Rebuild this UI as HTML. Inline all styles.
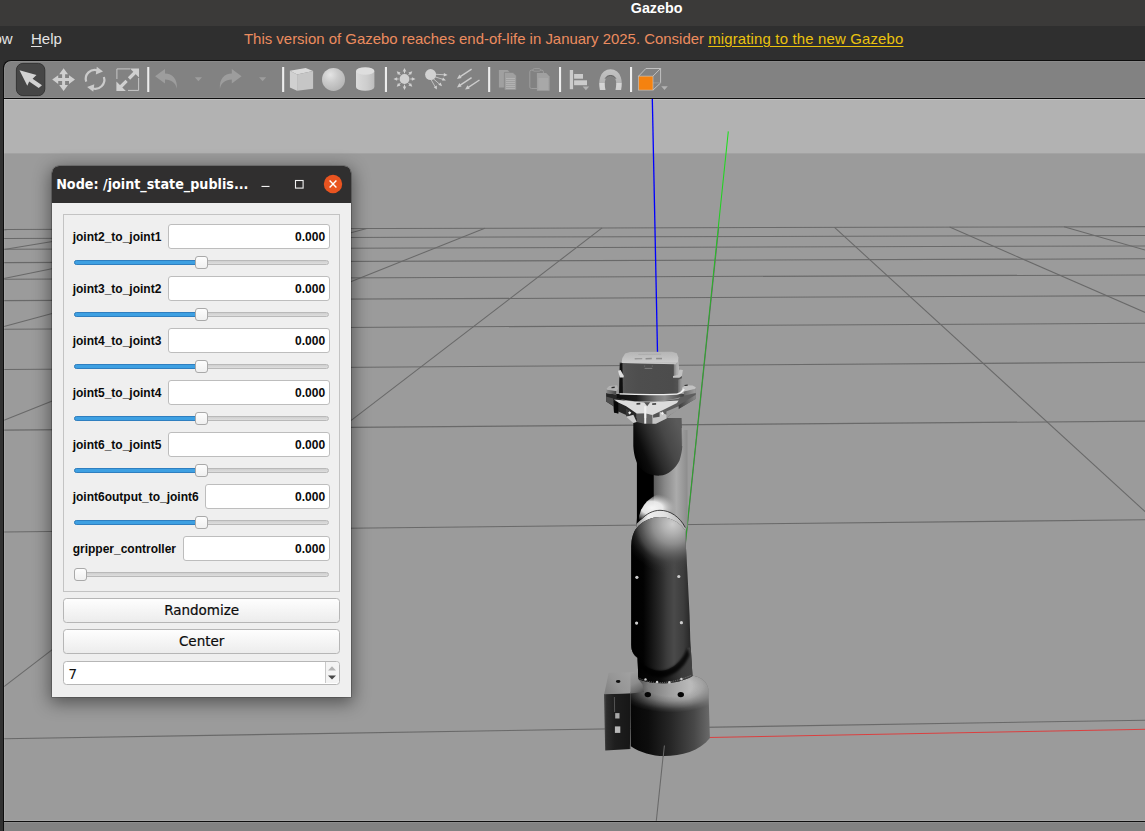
<!DOCTYPE html>
<html lang="en"><head><meta charset="utf-8"><title>Gazebo</title>
<style>
html,body{margin:0;padding:0;overflow:hidden}
body{width:1145px;height:831px;overflow:hidden;position:relative;background:#2f2f2f;font-family:"Liberation Sans",sans-serif}
#titlebar{position:absolute;left:0;top:0;width:1145px;height:26px;background:#3b3a39;color:#fff;font-weight:700;font-size:14.3px}
#titlebar span{position:absolute;left:630.8px;top:0px;line-height:17px;white-space:pre}
#menubar{position:absolute;left:0;top:26px;width:1145px;height:34px;background:#2f2f2f;color:#e4e4e4;font-size:15px}
#menubar .m{position:absolute;top:4px;line-height:17px;white-space:pre}
#menubar u{text-decoration:underline;text-underline-offset:2px}
#eol{position:absolute;left:244px;top:4px;line-height:17px;white-space:pre;color:#ec8c5f;font-size:14.95px}
#eol a{color:#eac20e;letter-spacing:.16px;text-decoration:underline;text-underline-offset:2px}
#scene{position:absolute;left:0;top:0}
#toolbar{position:absolute;left:3px;top:60px;width:1142px;border-right:0 !important;height:39px;background:#828282;border:1px solid #0e0e0e;border-radius:8px 0 0 0;box-sizing:border-box;box-shadow:inset 1px 0 0 rgba(255,255,255,.08),inset 0 1px 0 rgba(255,255,255,.08),inset 0 -1px 0 rgba(255,255,255,.08)}
#toolbar svg{position:absolute;left:-4px;top:-1px}
#dlg{position:absolute;left:52px;top:166px;width:299px;height:530.7px;background:#efefef;border-radius:7px 7px 0 0;box-shadow:0 4px 17px 2px rgba(0,0,0,.46),0 0 0 .6px rgba(0,0,0,.35)}
#dlgt{position:absolute;left:0;top:0;width:299px;height:36.6px;background:#302f2f;border-radius:7px 7px 0 0;color:#fff}
#dlgt .tt{position:absolute;left:4.2px;top:10.1px;font:700 14.2px/17px "DejaVu Sans Condensed","DejaVu Sans","Liberation Sans",sans-serif;white-space:pre}
#dlgt svg{position:absolute;left:0;top:0}
#grp{position:absolute;left:11px;top:48px;width:274.8px;height:376.3px;border:1px solid #c3c3c3;box-sizing:content-box}
.lb{position:absolute;left:20.7px;font:700 12px/14px "Liberation Sans",sans-serif;color:#0a0a0a;white-space:pre}
.inp{position:absolute;height:24.6px;box-sizing:border-box;background:#fff;border:1px solid #bdbdbd;border-radius:3px}
.inp span{position:absolute;right:3.9px;top:4.9px;font:700 12px/14px "Liberation Sans",sans-serif;color:#0a0a0a}
.grv{position:absolute;left:22px;width:255px;height:5.4px;box-sizing:border-box;border:1px solid #b9b9b9;border-radius:3px;background:linear-gradient(#cfcfcf,#dedede)}
.fil{position:absolute;left:22px;height:5.4px;box-sizing:border-box;border:1px solid #2f7fc0;border-radius:3px;background:#3ea0e2}
.hdl{position:absolute;width:12.6px;height:12.4px;box-sizing:border-box;border:1px solid #a9a9a9;border-radius:3px;background:linear-gradient(#fdfdfd,#f0f0f0)}
.btn{position:absolute;left:11px;width:277.3px;height:24.2px;box-sizing:border-box;border:1px solid #b6b6b6;border-radius:3.5px;background:linear-gradient(#fefefe,#ececec);text-align:center;color:#111}
.btn span{font:400 13.5px/23.6px "DejaVu Sans","Liberation Sans",sans-serif;-webkit-text-stroke:.2px #0c0c0c;color:#0c0c0c}
#spin{position:absolute;left:11px;top:495.2px;width:277.3px;height:23.6px;box-sizing:border-box;border:1px solid #b6b6b6;border-radius:3.5px;background:#fff;color:#111}
#spin span{position:absolute;left:4.3px;top:.7px;font:400 14px/22px "DejaVu Sans","Liberation Sans",sans-serif}
#spin i{position:absolute;right:13.6px;top:0;width:1px;height:21.2px;background:#c9c9c9}
#spin svg{position:absolute;right:.6px;top:-1px}
#spin:after{content:"";position:absolute;right:0;top:0;width:13.6px;height:21.2px;background:#f4f4f4;border-radius:0 3px 3px 0;z-index:0}
#spin svg{z-index:1}

</style></head><body>
<div id="titlebar"><span>Gazebo</span></div>
<div id="menubar"><span class="m" style="left:-6.6px">ow</span><span class="m" style="left:31px"><u>H</u>elp</span><span id="eol">This version of Gazebo reaches end-of-life in January 2025. Consider <a>migrating to the new Gazebo</a></span></div>
<svg id="scene" width="1145" height="831" viewBox="0 0 1145 831">
<rect x="4" y="98" width="1141" height="56" fill="#b2b2b2"/><rect x="4" y="99" width="1141" height="1" fill="#c2c2c2"/>
<rect x="4" y="153.4" width="1141" height="668" fill="#9b9b9b"/>
<g stroke="#696969" stroke-width="1.05" fill="none"><line x1="4.0" y1="738.7" x2="1150.0" y2="720.1"/><line x1="4.0" y1="531.9" x2="1150.0" y2="519.7"/><line x1="4.0" y1="430.1" x2="1150.0" y2="421.1"/><line x1="4.0" y1="369.5" x2="1150.0" y2="362.3"/><line x1="4.0" y1="329.2" x2="1150.0" y2="323.3"/><line x1="4.0" y1="300.6" x2="1150.0" y2="295.6"/><line x1="4.0" y1="279.2" x2="1150.0" y2="274.9"/><line x1="4.0" y1="262.6" x2="1150.0" y2="258.7"/><line x1="4.0" y1="249.3" x2="1150.0" y2="245.9"/><line x1="4.0" y1="238.4" x2="1150.0" y2="235.4"/><line x1="4.0" y1="229.4" x2="1150.0" y2="226.6"/><line x1="7.7" y1="229.4" x2="4.0" y2="229.9"/><line x1="128.2" y1="229.1" x2="4.0" y2="249.4"/><line x1="247.8" y1="228.8" x2="4.0" y2="278.5"/><line x1="366.7" y1="228.5" x2="4.0" y2="326.4"/><line x1="484.8" y1="228.2" x2="4.0" y2="420.3"/><line x1="602.1" y1="227.9" x2="4.0" y2="686.7"/><line x1="718.7" y1="227.6" x2="656.3" y2="821.0"/><line x1="834.5" y1="227.4" x2="1150.0" y2="516.1"/><line x1="949.6" y1="227.1" x2="1150.0" y2="314.6"/><line x1="1064.0" y1="226.8" x2="1150.0" y2="251.5"/></g>
<line x1="652.3" y1="98" x2="657.5" y2="352" stroke="#0000ff" stroke-width="1.3"/>
<defs><linearGradient id="gGreen" gradientUnits="userSpaceOnUse" x1="0" y1="131" x2="0" y2="748"><stop offset="0" stop-color="#1be01b"/><stop offset=".12" stop-color="#22d022"/><stop offset=".3" stop-color="#2ca62c"/><stop offset="1" stop-color="#2e9e2e"/></linearGradient></defs><line x1="728.3" y1="131.4" x2="664" y2="748" stroke="url(#gGreen)" stroke-width="1.05"/>
<line x1="666" y1="738.3" x2="1145" y2="729.3" stroke="#e23636" stroke-width=".9"/>
<defs>
<linearGradient id="gBaseH" gradientUnits="userSpaceOnUse" x1="631" y1="0" x2="710" y2="0"><stop offset="0" stop-color="#060606"/><stop offset=".22" stop-color="#0d0d0d"/><stop offset=".5" stop-color="#262626"/><stop offset=".8" stop-color="#484848"/><stop offset="1" stop-color="#6a6a6a"/></linearGradient>
<linearGradient id="gBaseTop" gradientUnits="userSpaceOnUse" x1="631" y1="0" x2="710" y2="0"><stop offset="0" stop-color="#505050"/><stop offset=".22" stop-color="#7a7a7a"/><stop offset=".5" stop-color="#a0a0a0"/><stop offset=".75" stop-color="#bababa"/><stop offset="1" stop-color="#b2b2b2"/></linearGradient><radialGradient id="gFade" gradientUnits="userSpaceOnUse" cx="670" cy="686" r="57.5" gradientTransform="translate(670 686) scale(1 .46) translate(-670 -686)"><stop offset="0" stop-color="#fff"/><stop offset=".39" stop-color="#fff"/><stop offset=".565" stop-color="#cfcfcf"/><stop offset=".74" stop-color="#787878"/><stop offset=".87" stop-color="#2e2e2e"/><stop offset="1" stop-color="#000"/></radialGradient><mask id="mTop" maskUnits="userSpaceOnUse" x="625" y="670" width="90" height="90"><rect x="625" y="670" width="90" height="90" fill="url(#gFade)"/></mask>

<linearGradient id="gBoxTop" gradientUnits="userSpaceOnUse" x1="605" y1="694" x2="633" y2="672"><stop offset="0" stop-color="#808080"/><stop offset=".45" stop-color="#969696"/><stop offset="1" stop-color="#a2a2a2"/></linearGradient>
<linearGradient id="gBoxF" gradientUnits="userSpaceOnUse" x1="604" y1="0" x2="631" y2="0"><stop offset="0" stop-color="#4c4c4c"/><stop offset=".1" stop-color="#2c2c2c"/><stop offset=".4" stop-color="#1e1e1e"/><stop offset="1" stop-color="#161616"/></linearGradient>
<linearGradient id="gLow" gradientUnits="userSpaceOnUse" x1="631" y1="0" x2="692" y2="0"><stop offset="0" stop-color="#000"/><stop offset=".2" stop-color="#020202"/><stop offset=".295" stop-color="#0e0e0e"/><stop offset=".487" stop-color="#2a2a2a"/><stop offset=".59" stop-color="#3c3c3c"/><stop offset=".705" stop-color="#4a4a4a"/><stop offset=".86" stop-color="#3c3c3c"/><stop offset=".95" stop-color="#2c2c2c"/><stop offset="1" stop-color="#242424"/></linearGradient>
<linearGradient id="gUp" gradientUnits="userSpaceOnUse" x1="636.9" y1="0" x2="687.6" y2="0"><stop offset="0" stop-color="#000"/><stop offset=".325" stop-color="#000"/><stop offset=".335" stop-color="#5c5c5c"/><stop offset=".55" stop-color="#888"/><stop offset=".78" stop-color="#ababab"/><stop offset="1" stop-color="#8c8c8c"/></linearGradient>
<linearGradient id="gWr" gradientUnits="userSpaceOnUse" x1="635" y1="456" x2="683" y2="436"><stop offset="0" stop-color="#020202"/><stop offset=".18" stop-color="#0c0c0c"/><stop offset=".42" stop-color="#2c2c2c"/><stop offset=".68" stop-color="#474747"/><stop offset="1" stop-color="#5a5a5a"/></linearGradient>
<radialGradient id="gSph" gradientUnits="userSpaceOnUse" cx="672.5" cy="524" r="50"><stop offset="0" stop-color="#cccccc"/><stop offset=".2" stop-color="#b0b0b0"/><stop offset=".4" stop-color="#8e8e8e"/><stop offset=".56" stop-color="#6a6a6a" stop-opacity=".95"/><stop offset=".68" stop-color="#555" stop-opacity=".8"/><stop offset=".78" stop-color="#4a4a4a" stop-opacity=".4"/><stop offset=".9" stop-color="#444" stop-opacity=".12"/><stop offset="1" stop-color="#444" stop-opacity="0"/></radialGradient>
<radialGradient id="gHi" gradientUnits="userSpaceOnUse" cx="652" cy="508" r="24" gradientTransform="translate(0 203.2) scale(1 .6)"><stop offset="0" stop-color="#f6f6f6"/><stop offset=".45" stop-color="#eee" stop-opacity=".95"/><stop offset=".75" stop-color="#ccc" stop-opacity=".5"/><stop offset="1" stop-color="#b0b0b0" stop-opacity="0"/></radialGradient>
<linearGradient id="gBand" gradientUnits="userSpaceOnUse" x1="638" y1="0" x2="688" y2="0"><stop offset="0" stop-color="#9a9a9a"/><stop offset=".2" stop-color="#eee"/><stop offset=".55" stop-color="#e0e0e0"/><stop offset="1" stop-color="#a8a8a8"/></linearGradient>
<linearGradient id="gHeadF" gradientUnits="userSpaceOnUse" x1="620" y1="0" x2="682" y2="0"><stop offset="0" stop-color="#5c5c5c"/><stop offset=".1" stop-color="#525252"/><stop offset=".3" stop-color="#4e4e4e"/><stop offset=".85" stop-color="#4c4c4c"/><stop offset="1" stop-color="#585858"/></linearGradient>
<linearGradient id="gHeadR" gradientUnits="userSpaceOnUse" x1="673" y1="0" x2="680" y2="0"><stop offset="0" stop-color="#707070"/><stop offset=".5" stop-color="#a8a8a8"/><stop offset="1" stop-color="#c2c2c2"/></linearGradient>
<linearGradient id="gHeadT" gradientUnits="userSpaceOnUse" x1="0" y1="351" x2="0" y2="364"><stop offset="0" stop-color="#b4b4b4"/><stop offset=".5" stop-color="#c0c0c0"/><stop offset=".85" stop-color="#cacaca"/><stop offset="1" stop-color="#a0a0a0"/></linearGradient>
<linearGradient id="gRing" gradientUnits="userSpaceOnUse" x1="616" y1="0" x2="684" y2="0"><stop offset="0" stop-color="#0c0c0c"/><stop offset=".3" stop-color="#1c1c1c"/><stop offset=".6" stop-color="#7a7a7a"/><stop offset=".72" stop-color="#8c8c8c"/><stop offset="1" stop-color="#404040"/></linearGradient>
<clipPath id="cArm"><path d="M636.9 430 L636.9 518 C636.6 522 636.4 525 636.2 527 C633 533 631.1 539 631.1 546 L631.1 645 C631.5 652 634 655 637.6 658 L638.3 679 C655 686 680 684 692.5 676 L690.3 640 L689.6 615 L687.4 572 L685.7 543 L685.3 530 L687.5 526 L687.5 430 Z"/></clipPath>
<clipPath id="cHi"><circle cx="668" cy="522" r="29.5"/></clipPath>
<linearGradient id="gNeck" gradientUnits="userSpaceOnUse" x1="637" y1="0" x2="693" y2="0"><stop offset="0" stop-color="#000"/><stop offset=".4" stop-color="#0a0a0a"/><stop offset=".6" stop-color="#222"/><stop offset=".8" stop-color="#3a3a3a"/><stop offset="1" stop-color="#424242"/></linearGradient><filter id="fB" x="-20%" y="-20%" width="140%" height="140%"><feGaussianBlur stdDeviation=".9"/></filter>
<linearGradient id="gWingR" gradientUnits="userSpaceOnUse" x1="678" y1="0" x2="696" y2="0"><stop offset="0" stop-color="#3a3a3a"/><stop offset="1" stop-color="#8a8a8a"/></linearGradient>
<linearGradient id="gEarL" gradientUnits="userSpaceOnUse" x1="606" y1="0" x2="616.5" y2="0"><stop offset="0" stop-color="#8c8c8c"/><stop offset="1" stop-color="#444"/></linearGradient>
<linearGradient id="gEarR" gradientUnits="userSpaceOnUse" x1="684" y1="0" x2="696" y2="0"><stop offset="0" stop-color="#6a6a6a"/><stop offset="1" stop-color="#a0a0a0"/></linearGradient>
<linearGradient id="gHeadR2" gradientUnits="userSpaceOnUse" x1="678" y1="0" x2="682" y2="0"><stop offset="0" stop-color="#6a6a6a"/><stop offset="1" stop-color="#a4a4a4"/></linearGradient>
<linearGradient id="gJoin" gradientUnits="userSpaceOnUse" x1="632" y1="673" x2="642" y2="694"><stop offset="0" stop-color="#9c9c9c"/><stop offset=".45" stop-color="#8c8c8c"/><stop offset=".75" stop-color="#6e6e6e"/><stop offset="1" stop-color="#4a4a4a"/></linearGradient>
</defs>

<g id="robot">
<!-- base box -->
<path d="M604 694 L630.6 693 L630.6 748.9 L605.2 750.4 Z" fill="url(#gBoxF)"/>
<path d="M608.7 672.7 L633.3 672.3 L633 686 L640 693 L604.2 694.2 Z" fill="url(#gBoxTop)"/>
<path d="M633 672.4 L630.3 749" stroke="#b0b0b0" stroke-width=".5" fill="none"/>
<ellipse cx="618.2" cy="681.5" rx="2.3" ry="1.4" fill="#111"/>
<path d="M614.4 697 L614.6 712" stroke="#6a6a6a" stroke-width=".7"/>
<rect x="615.2" y="713.1" width="4.3" height="5.4" fill="#a8a8a8"/><rect x="614.9" y="726.4" width="5.4" height="6.5" fill="#b8b8b8"/>
<!-- base cylinder -->
<path d="M630.8 692 L630.8 746.2 C640 752.5 652 756 664.3 756 C681 756 700 751 709.9 738 L708.4 689 C707 681 700 677 692.5 675.5 L640 678 C636 681 633 686 630.8 692 Z" fill="url(#gBaseH)"/>
<g mask="url(#mTop)"><path d="M630.8 692 L630.8 738 L709.9 738 L708.4 689 C707 681 700 677 692.5 675.5 L640 678 C636 681 633 686 630.8 692 Z" fill="url(#gBaseTop)"/></g>
<ellipse cx="647.8" cy="694.6" rx="3.2" ry="2.6" fill="#050505"/><ellipse cx="680.8" cy="694.6" rx="3.2" ry="2.6" fill="#050505"/>
<path d="M630.5 672.4 L638 672.4 L638.4 679 L642.5 684.5 L644 692 L630.5 693.6 Z" fill="url(#gJoin)"/>
<!-- arm -->
<g clip-path="url(#cArm)">
<rect x="636" y="428" width="53" height="110" fill="url(#gUp)"/>
<g clip-path="url(#cHi)"><ellipse cx="652" cy="508" rx="25" ry="15" fill="url(#gHi)"/></g>
<path d="M641.2 519.6 C646 514 653 510.3 660 510.3 C670 510.3 680 517 685.3 527.6 L690 560 L630 560 L630 530 Z" fill="url(#gBand)"/>
<path d="M641.2 519.6 C646 514 653 510.3 660 510.3 C670 510.3 680 517 685.3 527.6" fill="none" stroke="#1a1a1a" stroke-width=".8"/>
<path d="M630 546 A30 29 0 0 1 690 546 L694 690 L630 690 Z" fill="url(#gLow)"/>
<path d="M630 546 A30 29 0 0 1 690 546 L694 600 L630 600 Z" fill="url(#gSph)"/>
<path d="M631 645 C632 652 634 655 637.6 657.8 C641 664 650 670.8 660 670.8 C668 670.8 680 666 687.4 647.7 L694 647 L694 690 L631 690 Z" fill="url(#gNeck)"/>
<path d="M631 645 C632 652 634 655 637.6 657.8 C641 664 650 670.8 660 670.8 C668 670.8 680 666 687.4 647.7 L689.5 655 C683 672 668 677.5 660 677.5 C650 677.5 641 672 637.6 664 Z" fill="#000" opacity=".8" filter="url(#fB)"/>
</g>
<!-- neck ring + screws -->
<path d="M638.3 678 Q 661 688.5 691.8 675.1" fill="none" stroke="#9a9a9a" stroke-width=".6" stroke-dasharray="1.2 1"/>
<g fill="#cdcdcd"><circle cx="645.5" cy="679.4" r="1.2"/><circle cx="657.1" cy="682" r="1.2"/><circle cx="669.4" cy="682.3" r="1.2"/><circle cx="681.4" cy="679.1" r="1.3"/>
<circle cx="636.9" cy="577.3" r="1.6"/><circle cx="678.8" cy="576.5" r="1.6"/><circle cx="636.6" cy="623.1" r="1.6"/><circle cx="681.4" cy="622.7" r="1.6"/></g>
<!-- wrist capsule -->
<path d="M633.3 418 L633.3 446 C633.8 455 636 461 638 465 C643 473 652 476 660 475.6 C668 475 676 468 679.5 460.4 C682 453 682.6 446 682.4 441.7 L681.6 418 Z" fill="url(#gWr)"/>
<path d="M682 428 L682.4 446" stroke="#a8a8a8" stroke-width=".6" fill="none"/>

<path d="M606.1 393.1 L616.2 394.4 L616.2 397.5 L626.2 401.0 L636.7 401.8 L636.7 421.9 L633.2 422.1 L626.2 414.9 L618.3 411.4 L618.3 413.4 L614.0 412.5 L613.5 406.2 L606.1 401.4 Z" fill="#262626" />
<path d="M606.1 396.4 L613.1 398.5 L614.0 406.2 L606.1 401.5 Z" fill="#4e4e4e" />
<path d="M613.7 401.0 L618.3 402.5 L618.3 413.4 L614.0 412.5 Z" fill="#080808" />
<path d="M683.8 394.0 L695.8 388.3 L695.8 398.8 L678.6 409.0 L669.9 415.1 L666.4 418.4 L655.9 423.7 L652.4 423.7 L652.4 402.7 L678.6 398.8 Z" fill="#5e5e5e" />
<path d="M678.6 405.3 L695.8 394.7 L695.8 398.8 L678.6 409.0 Z" fill="url(#gWingR)" />
<path d="M666.4 411.6 L678.6 406.2 L678.6 410.1 L669.9 415.1 L666.4 418.4 Z" fill="#9a9a9a" />
<path d="M636.7 413.2 L644.2 413.2 L644.2 423.7 L636.7 422.1 Z" fill="#585858" />
<path d="M646.3 413.6 L652.6 414.9 L652.6 423.7 L646.3 423.7 Z" fill="#686868" />
<path d="M652.4 415.1 L660.3 412.1 L666.6 414.8 L666.6 418.4 L655.9 423.7 L652.4 423.7 Z" fill="#c6c6c6" />
<path d="M653.1 413.9 L659.6 412.1 L659.6 416.7 L653.1 417.7 Z" fill="#525252" />
<path d="M626.2 416.7 L633.4 414.8 L636.7 421.9 L633.4 423.0 Z" fill="#cccccc" />
<path d="M625.9 408.8 L630.1 410.4 L630.1 414.9 L626.2 416.5 Z" fill="#3a3a3a" />
<path d="M614.0 399.6 L626.2 400.8 L636.7 401.5 L645.4 402.9 L655.9 401.8 L678.6 400.4 L677.0 402.9 L663.1 409.9 L652.6 415.1 L646.3 413.6 L644.2 413.2 L636.7 413.4 L626.2 406.2 L618.3 402.4 Z" fill="#dcdcdc" />
<path d="M644.2 406.2 L646.3 406.2 L646.3 423.7 L644.2 423.7 Z" fill="#f0f0f0" />
<path d="M636.5 402.9 L640.3 402.7 L640.3 404.6 L636.5 404.8 Z" fill="#3c3c3c" />
<path d="M652.2 403.2 L656.1 403.1 L656.1 404.8 L652.2 405.0 Z" fill="#4a4a4a" />
<path d="M644.1 402.3 L650.2 402.3 L647.2 406.2 Z" fill="#555" />
<path d="M628.1 412.8 L629.7 411.2 L631.3 412.8 L629.7 414.5 Z" fill="#eeeeee" />
<path d="M660.9 413.2 L662.4 411.6 L664.0 413.2 L662.4 414.9 Z" fill="#eeeeee" />
<path d="M606.6 388.7 L616.2 390.9 L616.2 394.4 L606.6 393.3 Z" fill="url(#gEarL)" />
<path d="M606.6 388.5 L609.2 386.1 L617.0 385.2 L618.1 388.7 L616.4 391.1 L606.8 389.8 Z" fill="#b2b2b2" />
<path d="M611.5 387.0 L614.7 386.6 L614.7 387.9 L611.5 388.2 Z" fill="#2c2c2c" />
<path d="M683.8 391.4 L695.8 388.3 L695.8 393.1 L684.3 395.4 Z" fill="url(#gEarR)" />
<path d="M681.2 388.6 L685.2 385.2 L692.6 385.6 L695.8 387.3 L695.4 388.7 L683.8 391.5 Z" fill="#c2c2c2" />
<path d="M684.5 384.9 L687.7 384.5 L687.7 385.8 L684.5 386.1 Z" fill="#2c2c2c" />
<path d="M619.7 362.6 L678.1 363.6 L679.5 370.1 L681.9 376.1 L681.9 393.7 L662.4 393.9 L634.7 393.9 L618.8 393.4 Z" fill="url(#gHeadF)" />
<path d="M619.9 363.5 L622.4 363.1 L622.9 393.7 L619.1 393.4 Z" fill="#101010" />
<path d="M678.1 379.7 L681.9 378.3 L681.9 393.7 L678.1 393.8 Z" fill="url(#gHeadR2)" />
<path d="M673.8 363.6 L678.1 358.1 L679.3 370.1 L679.3 376.1 L673.8 376.1 Z" fill="url(#gHeadR)" />
<path d="M621.6 362.4 L622.4 358.1 L625.1 353.5 L630.1 352.0 L672.0 351.7 L676.8 353.2 L678.4 357.5 L677.8 361.9 L675.9 364.0 L622.9 362.9 Z" fill="url(#gHeadT)" />
<path d="M622.0 362.5 L675.9 363.8" fill="none" stroke="#cfcfcf" stroke-width="0.9" />
<path d="M634.7 358.1 L642.2 357.9 L642.2 359.3 L634.7 359.4 Z" fill="#9a9a9a" />
<path d="M645.6 357.9 L651.8 357.8 L651.8 359.3 L645.6 359.4 Z" fill="#8e8e8e" />
<path d="M656.1 357.8 L662.0 357.8 L662.0 359.3 L656.1 359.3 Z" fill="#8e8e8e" />
<path d="M638.3 354.4 L661.2 354.2" fill="none" stroke="#a2a2a2" stroke-width="0.6" />
<path d="M644.6 368.4 L652.3 368.4" fill="none" stroke="#a0a0a0" stroke-width="0.6" />
<path d="M644.6 365.5 L644.6 366.7" fill="none" stroke="#8c8c8c" stroke-width="0.5" />
<path d="M652.3 365.5 L652.3 366.7" fill="none" stroke="#8c8c8c" stroke-width="0.5" />
<path d="M618.1 370.8 L620.5 370.1 L623.9 376.1 L623.4 377.6 L619.7 377.6 Z" fill="#dcdcdc" />
<path d="M673.0 375.9 L678.1 374.9 L679.3 369.6 L682.9 370.1 L681.9 376.1 L679.3 377.8 L673.0 377.8 Z" fill="#c2c2c2" />
<path d="M616.2 394 L683.8 394 L683.8 396.3 Q 672 400.3 655.9 401.3 L634.9 401.3 Q 622 399.8 616.2 398.2 Z" fill="url(#gRing)"/>
<path d="M619.6 393.2 Q 648 394.6 676.9 393.4 Q 681 392 683.4 388.4 L684.8 389.6 Q 682.5 394 677 394.8 Q 648 396 619.6 394.6 Z" fill="#f0f0f0"/>
</g>
<line x1="664.4" y1="745.5" x2="663.2" y2="757" stroke="#6a6a6a" stroke-width="1"/>
<rect x="4" y="820" width="1141" height="1" fill="#fff" fill-opacity=".1"/><rect x="0" y="821" width="1145" height="1" fill="#0e0e0e"/>
<rect x="0" y="822" width="1145" height="9" fill="#828282"/><rect x="0" y="822" width="1145" height="1" fill="#8e8e8e"/>
<rect x="0" y="60" width="3" height="771" fill="#313131"/><rect x="3" y="66" width="1" height="765" fill="#0e0e0e"/><rect x="4" y="99" width="1" height="722" fill="#fff" fill-opacity=".1"/>
</svg>
<div id="toolbar"><svg width="700" height="38" viewBox="0 60 700 38">
<defs>
<radialGradient id="sph" cx="0.36" cy="0.3" r="0.75"><stop offset="0" stop-color="#e4e4e4"/><stop offset="0.45" stop-color="#cbcbcb"/><stop offset="1" stop-color="#b4b4b4"/></radialGradient>
<linearGradient id="cyl" x1="0" x2="1"><stop offset="0" stop-color="#dadada"/><stop offset="0.6" stop-color="#cdcdcd"/><stop offset="1" stop-color="#bdbdbd"/></linearGradient>
<linearGradient id="mag" x1="0" y1="0" x2="0" y2="1"><stop offset="0" stop-color="#c4c4c4"/><stop offset="0.66" stop-color="#b4b4b4"/><stop offset="0.67" stop-color="#d6d6d6"/><stop offset="1" stop-color="#d0d0d0"/></linearGradient>
</defs>
<!-- select (active) -->
<rect x="16.4" y="63.4" width="28.4" height="32.2" rx="6.5" fill="#464646" stroke="#343434" stroke-width="1"/>
<path d="M19.5 70.2 L36.5 75 L32.6 78.7 L42 85.3 L38.7 87.9 L29.2 81.6 L27.3 85.8 Z" fill="#d2d2d2"/>
<!-- translate -->
<path fill="#cfcfcf" d="M63.6 68.2 L68 74.2 L65.1 74.2 L65.1 78.1 L69 78.1 L69 75.2 L75 79.6 L69 84 L69 81.1 L65.1 81.1 L65.1 85 L68 85 L63.6 91 L59.2 85 L62.1 85 L62.1 81.1 L58.2 81.1 L58.2 84 L52.2 79.6 L58.2 75.2 L58.2 78.1 L62.1 78.1 L62.1 74.2 L59.2 74.2 Z"/>
<!-- rotate -->
<g fill="none" stroke="#cbcbcb" stroke-width="2.2"><path d="M86.2 81.6 A9 9 0 0 1 97.8 70.4"/><path d="M103.9 77 A9 9 0 0 1 92.3 88.2"/></g>
<path d="M96.8 66.8 L103 71.5 L95.8 74.4 Z" fill="#cbcbcb"/><path d="M93.3 91.8 L87.1 87.1 L94.3 84.2 Z" fill="#cbcbcb"/>
<!-- scale -->
<g stroke="#c6c6c6" stroke-width="1" fill="none"><path d="M130 68.9 H116.9 V79"/><path d="M138.6 78 V90.4 H128"/></g>
<path d="M120.5 87 L126.6 80.9 M129 78.5 L135.5 72" stroke="#d0d0d0" stroke-width="3.2" fill="none"/>
<path d="M139 68.4 L139 77.5 L130 68.4 Z" fill="#d0d0d0"/><path d="M116.4 90.9 L116.4 81.5 L125.8 90.9 Z" fill="#d0d0d0"/>
<!-- separators -->
<g fill="#ededed"><rect x="147.2" y="67" width="2.1" height="25"/><rect x="282.1" y="67" width="2.1" height="25"/><rect x="384.9" y="67" width="2.1" height="25"/><rect x="488.1" y="67" width="2.1" height="25"/><rect x="559" y="67" width="2.1" height="25"/><rect x="630" y="67" width="2.1" height="25"/></g>
<!-- undo / redo -->
<g fill="#9d9d9d"><path d="M155.1 76.3 L165 69.1 L165 73.6 C172.5 73.8 177.6 79 176.9 88.8 C175.6 83 171.5 79.9 165 79.6 L165 83.5 Z"/>
<path d="M241.6 76.3 L231.8 69.1 L231.8 73.6 C224.3 73.8 219.2 79 219.9 88.8 C221.2 83 225.3 79.9 231.8 79.6 L231.8 83.5 Z"/>
<path d="M194.8 77.2 H202 L198.4 81.2 Z"/><path d="M259 77.2 H266.2 L262.6 81.2 Z"/></g>
<!-- box -->
<path d="M289.9 70.8 L305.6 68.1 L313.1 71.1 L297.1 74.4 Z" fill="#dadada"/><path d="M289.9 70.8 L297.1 74.4 L297.1 90.8 L289.9 87.5 Z" fill="#d0d0d0"/><path d="M297.1 74.4 L313.1 71.1 L313.1 88.8 L297.1 90.8 Z" fill="#c6c6c6"/>
<!-- sphere -->
<circle cx="333.5" cy="79.4" r="11.5" fill="url(#sph)"/>
<!-- cylinder -->
<path d="M356 71 V87 A9.2 3.8 0 0 0 374.4 87 V71 Z" fill="url(#cyl)"/><ellipse cx="365.2" cy="71" rx="9.2" ry="3.8" fill="#dedede"/>
<!-- point light -->
<g fill="#d0d0d0" stroke="none"><circle cx="404.5" cy="79" r="4.9"/>
<path d="M404.5 68 L406.3 71.6 L405 71.6 L405 73.2 L404 73.2 L404 71.6 L402.7 71.6 Z"/><path d="M404.5 68 L406.3 71.6 L405 71.6 L405 73.2 L404 73.2 L404 71.6 L402.7 71.6 Z" transform="rotate(45 404.5 79)"/><path d="M404.5 68 L406.3 71.6 L405 71.6 L405 73.2 L404 73.2 L404 71.6 L402.7 71.6 Z" transform="rotate(90 404.5 79)"/><path d="M404.5 68 L406.3 71.6 L405 71.6 L405 73.2 L404 73.2 L404 71.6 L402.7 71.6 Z" transform="rotate(135 404.5 79)"/><path d="M404.5 68 L406.3 71.6 L405 71.6 L405 73.2 L404 73.2 L404 71.6 L402.7 71.6 Z" transform="rotate(180 404.5 79)"/><path d="M404.5 68 L406.3 71.6 L405 71.6 L405 73.2 L404 73.2 L404 71.6 L402.7 71.6 Z" transform="rotate(225 404.5 79)"/><path d="M404.5 68 L406.3 71.6 L405 71.6 L405 73.2 L404 73.2 L404 71.6 L402.7 71.6 Z" transform="rotate(270 404.5 79)"/><path d="M404.5 68 L406.3 71.6 L405 71.6 L405 73.2 L404 73.2 L404 71.6 L402.7 71.6 Z" transform="rotate(315 404.5 79)"/></g>
<!-- spot light -->
<circle cx="430.6" cy="74.6" r="5.5" fill="#d2d2d2"/>
<g stroke="#d2d2d2" stroke-width="0.8" fill="#d2d2d2"><path d="M434 74.2 L445 74.8"/><path d="M434 76.5 L443.6 79.6"/><path d="M432.5 78 L440 84.6"/><path d="M431 79.5 L435.6 87.6"/>
<path d="M447.6 74.9 L443.9 73 L443.7 76.4 Z" stroke="none"/><path d="M445.9 80.4 L443 77.6 L442 80.6 Z" stroke="none"/><path d="M442 86.2 L440.7 82.4 L438.3 84.8 Z" stroke="none"/><path d="M436.8 89.6 L436.8 85.6 L433.8 87.2 Z" stroke="none"/></g>
<!-- directional -->
<g stroke="#cdcdcd" stroke-width="1.4" fill="none"><path d="M471.6 69.1 L459.5 77.2"/><path d="M471.6 77.7 L459.5 85.7"/><path d="M479.5 80 L467.6 87.9"/></g>
<g fill="#cdcdcd"><path d="M457 78.9 L459.4 74.6 L461.6 78 Z"/><path d="M457 87.4 L459.4 83.1 L461.6 86.5 Z"/><path d="M465.1 89.6 L467.5 85.3 L469.7 88.7 Z"/></g>
<!-- copy -->
<g fill="#a0a0a0"><path d="M498.9 70 H507.6 L511 73.4 V87.5 H498.9 Z"/><path d="M504.4 72.4 H513 L516.4 75.8 V90.1 H504.4 Z" stroke="#828282" stroke-width="0.7"/></g>
<g stroke="#bdbdbd" stroke-width="0.6"><path d="M506 78.5 H515 M506 80.5 H515 M506 82.5 H515 M506 84.5 H515 M506 86.5 H515 M506 88.5 H515"/></g>
<!-- paste -->
<rect x="529.8" y="70.2" width="13.6" height="18.3" rx="1.6" fill="none" stroke="#a0a0a0" stroke-width="0.9"/><rect x="533" y="68.6" width="7.4" height="2.6" rx="1.2" fill="#828282" stroke="#a0a0a0" stroke-width="0.8"/>
<path d="M536.9 73 H546.2 L549.6 76.4 V90.8 H536.9 Z" fill="#a0a0a0"/>
<g stroke="#bdbdbd" stroke-width="0.6"><path d="M538.4 79 H548.2 M538.4 81 H548.2 M538.4 83 H548.2 M538.4 85 H548.2 M538.4 87 H548.2 M538.4 89 H548.2"/></g>
<!-- align -->
<g fill="#cbcbcb"><rect x="569.8" y="70" width="3.3" height="19.2"/><rect x="574.1" y="74" width="8.9" height="4.7"/><rect x="574.1" y="80.3" width="12.9" height="4.9"/></g><path d="M582.6 86.6 H589.2 L585.9 90.3 Z" fill="#b2b2b2"/>
<!-- magnet -->
<path d="M599.9 90 C598.9 85 599 80.5 600.2 77.3 A10.6 10.6 0 0 1 620.8 77.3 C622 80.5 622.1 85 621.1 90 H615.5 C616.5 85.5 616.4 82 615.7 80 A5.4 5.4 0 0 0 605.3 80 C604.6 82 604.5 85.5 605.5 90 Z" fill="url(#mag)"/>
<path d="M605.2 78.6 A5.6 4.6 0 0 1 615.8 78.6" fill="none" stroke="#4a4a4a" stroke-width="0.9"/>
<!-- view cube -->
<g stroke="#c8c8c8" stroke-width="0.9" fill="none"><path d="M645.9 68.5 H660.6 V82.9 L653 90.1 M638.6 76.1 L645.9 68.5 M653 76.1 L660.6 68.5"/><path d="M653 82.9 H660.6" stroke="#9a9a9a"/></g>
<rect x="638.6" y="76.1" width="14.4" height="14" fill="#f5820f" stroke="#c8c8c8" stroke-width="0.6"/>
<path d="M661.2 86.3 H667.8 L664.5 90 Z" fill="#b2b2b2"/>
</svg>
</div>
<div id="dlg">
<div id="dlgt"><span class="tt">Node: /joint_state_publis...</span>
<svg width="299" height="37" viewBox="0 0 299 37"><rect x="209.5" y="19.9" width="8" height="1.1" fill="#f2f2f2"/><rect x="243.5" y="14.5" width="7.6" height="7.6" fill="none" stroke="#f2f2f2" stroke-width="1.1"/><circle cx="281" cy="18" r="9.2" fill="#e95420"/><path d="M277.6 14.6 L284.4 21.4 M284.4 14.6 L277.6 21.4" stroke="#fff" stroke-width="1.4" fill="none"/></svg></div>
<div id="grp"></div>
<span class="lb" style="top:63.9px">joint2_to_joint1</span>
<div class="inp" style="left:116.3px;top:58.4px;width:161.7px"><span>0.000</span></div>
<div class="grv" style="top:93.8px"></div>
<div class="fil" style="top:93.8px;width:127.2px"></div>
<div class="hdl" style="left:143.2px;top:90.3px"></div>
<span class="lb" style="top:115.9px">joint3_to_joint2</span>
<div class="inp" style="left:116.3px;top:110.4px;width:161.7px"><span>0.000</span></div>
<div class="grv" style="top:145.8px"></div>
<div class="fil" style="top:145.8px;width:127.2px"></div>
<div class="hdl" style="left:143.2px;top:142.3px"></div>
<span class="lb" style="top:167.9px">joint4_to_joint3</span>
<div class="inp" style="left:116.3px;top:162.4px;width:161.7px"><span>0.000</span></div>
<div class="grv" style="top:197.8px"></div>
<div class="fil" style="top:197.8px;width:127.2px"></div>
<div class="hdl" style="left:143.2px;top:194.3px"></div>
<span class="lb" style="top:219.9px">joint5_to_joint4</span>
<div class="inp" style="left:116.3px;top:214.4px;width:161.7px"><span>0.000</span></div>
<div class="grv" style="top:249.8px"></div>
<div class="fil" style="top:249.8px;width:127.2px"></div>
<div class="hdl" style="left:143.2px;top:246.3px"></div>
<span class="lb" style="top:271.9px">joint6_to_joint5</span>
<div class="inp" style="left:116.3px;top:266.4px;width:161.7px"><span>0.000</span></div>
<div class="grv" style="top:301.8px"></div>
<div class="fil" style="top:301.8px;width:127.2px"></div>
<div class="hdl" style="left:143.2px;top:298.3px"></div>
<span class="lb" style="top:323.9px">joint6output_to_joint6</span>
<div class="inp" style="left:152.6px;top:318.4px;width:125.4px"><span>0.000</span></div>
<div class="grv" style="top:353.8px"></div>
<div class="fil" style="top:353.8px;width:127.2px"></div>
<div class="hdl" style="left:143.2px;top:350.3px"></div>
<span class="lb" style="top:375.9px">gripper_controller</span>
<div class="inp" style="left:131.4px;top:370.4px;width:146.6px"><span>0.000</span></div>
<div class="grv" style="top:405.8px"></div>
<div class="hdl" style="left:22.0px;top:402.3px"></div>
<div class="btn" style="top:432.3px;height:24.6px"><span>Randomize</span></div>
<div class="btn" style="top:463.4px"><span>Center</span></div>
<div id="spin"><span>7</span><i></i><svg width="14" height="23" viewBox="0 0 14 23"><path d="M3 9.4 L7 5.2 L11 9.4 Z" fill="#b4b4b4"/><path d="M3 14.4 L7 18.6 L11 14.4 Z" fill="#474747"/></svg></div>
</div>
</body></html>
